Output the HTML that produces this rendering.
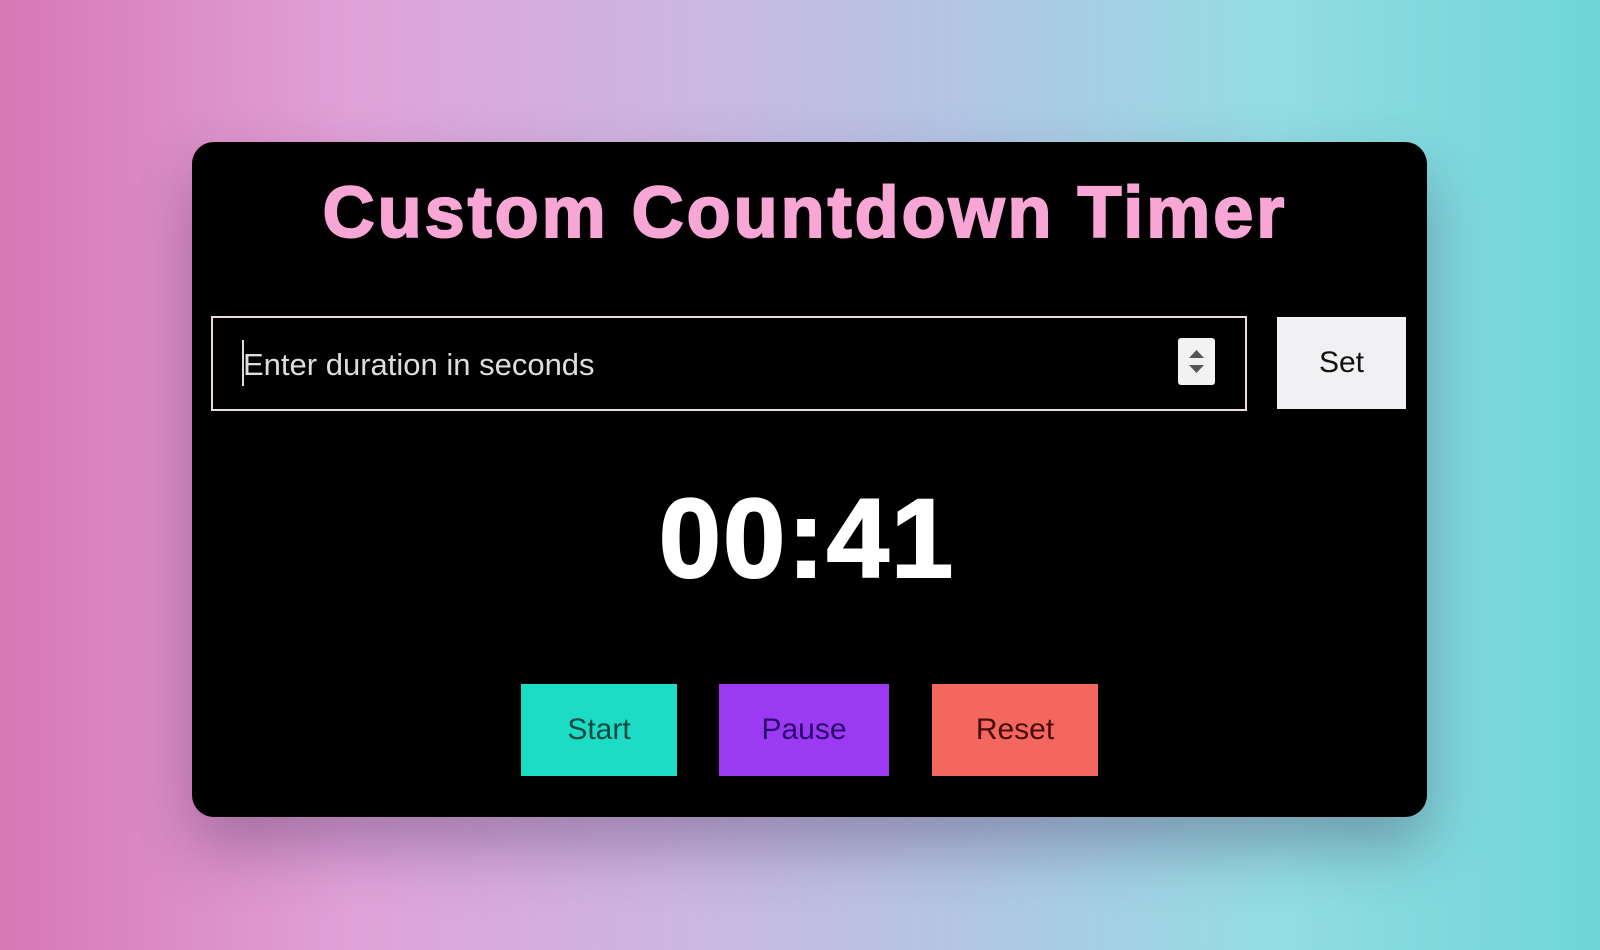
<!DOCTYPE html>
<html><head><meta charset="utf-8"><style>
html,body{margin:0;padding:0;width:1600px;height:950px;overflow:hidden}
body{background:linear-gradient(90deg,#d777b5 0%,#e0a2d8 22%,#cdb6e0 42%,#b3c6e4 60%,#92dde3 80%,#6fd6d6 100%);font-family:"Liberation Sans",sans-serif;position:relative}
.card{position:absolute;left:192px;top:142px;width:1235px;height:675px;background:#000;border-radius:22px;box-shadow:0 30px 60px rgba(60,40,80,.35)}
.title{position:absolute;left:0;right:0;top:172px;text-align:center;font-size:72px;font-weight:bold;color:#f7a6d6;letter-spacing:3px;-webkit-text-stroke:2px #f7a6d6;padding-left:10px}
.input{position:absolute;left:211px;top:316px;width:1036px;height:95px;border:2px solid #eadbe2;box-sizing:border-box}
.ph{position:absolute;left:243px;top:347px;font-size:31px;color:#ddd}
.caret{position:absolute;left:242px;top:340px;width:2px;height:46px;background:#ddd}
.spin{position:absolute;left:1178px;top:338px;width:37px;height:47px;background:#f2f2f2;border-radius:3px}
.set{position:absolute;left:1277px;top:317px;width:129px;height:92px;background:#f1f1f3;color:#111;font-size:30px;text-align:center;line-height:92px}
.time{position:absolute;left:0;right:0;top:474px;text-align:center;font-size:112px;font-weight:bold;color:#fff;padding-left:14px;letter-spacing:2px;-webkit-text-stroke:2px #fff}
.btn{position:absolute;top:684px;height:92px;line-height:92px;text-align:center;font-size:30px}
</style></head><body>
<div class="card"></div>
<div class="title">Custom Countdown Timer</div>
<div class="input"></div>
<div class="caret"></div>
<div class="ph">Enter duration in seconds</div>
<div class="spin"><svg width="37" height="47"><path d="M11 20 L18.5 12 L26 20Z M11 27 L18.5 35 L26 27Z" fill="#555"/></svg></div>
<div class="set">Set</div>
<div class="time">00:41</div>
<div class="btn" style="left:521px;width:156px;background:#1ddcc6;color:#0b4a42">Start</div>
<div class="btn" style="left:719px;width:170px;background:#9b3af2;color:#2a0c6c">Pause</div>
<div class="btn" style="left:932px;width:166px;background:#f3675f;color:#4a0b0b">Reset</div>
</body></html>
